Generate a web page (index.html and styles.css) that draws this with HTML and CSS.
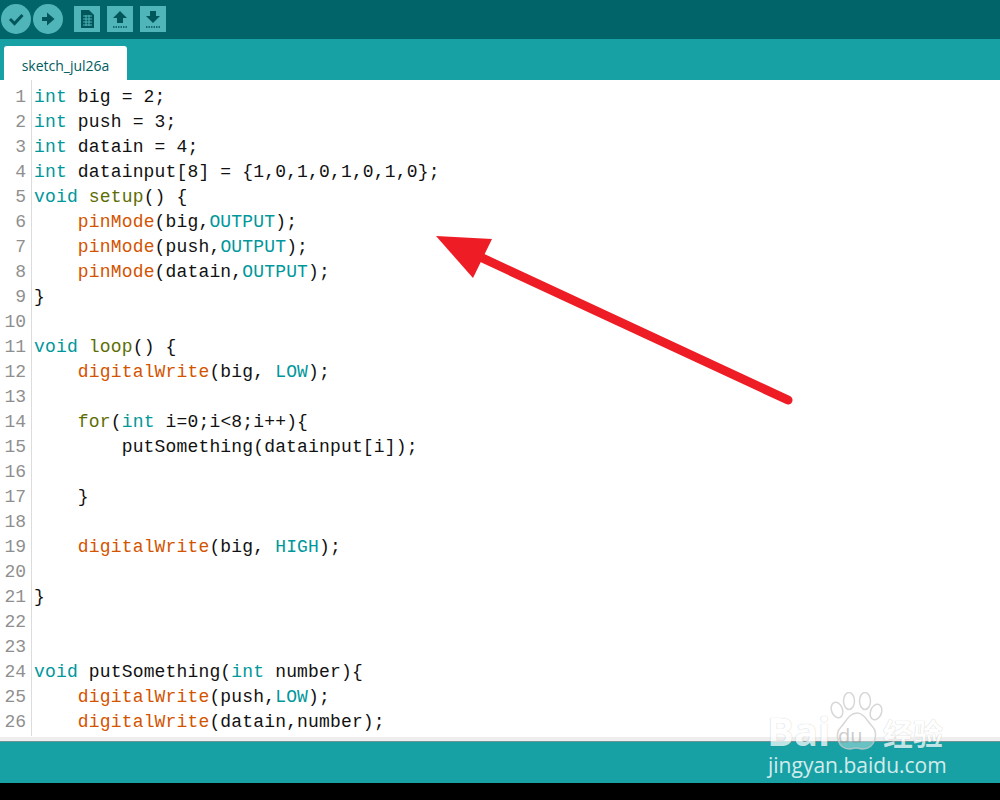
FILE: index.html
```html
<!DOCTYPE html>
<html lang="en">
<head>
<meta charset="utf-8">
<title>sketch_jul26a</title>
<link rel="stylesheet" href="styles.css">
</head>
<body>
<div class="app">
  <header class="toolbar">
    <div class="round-btn"><svg width="30" height="30" viewBox="0 0 30 30"><path d="M9 15l4.500 4.500 8-8.500" fill="none" stroke="#00565a" stroke-width="3"/></svg></div>
    <div class="round-btn"><svg width="30" height="30" viewBox="0 0 30 30"><path d="M9 13h5V8.500l7.500 6.500-7.500 6.500V17H9z" fill="#00565a"/></svg></div>
    <div class="square-btn first"><svg width="26" height="26" viewBox="0 0 26 26"><path d="M7 4h8l5 5v13H7z" fill="#00565a"/><path d="M9 10h9M9 13h9M9 16h9M9 19h9M12 9v11M15 9v11" stroke="#4fb5b8" stroke-width="1" fill="none"/></svg></div>
    <div class="square-btn"><svg width="26" height="26" viewBox="0 0 26 26"><path d="M13 5l7 7h-4v5h-6v-5H6z" fill="#00565a"/><path d="M6 21h14" stroke="#00565a" stroke-width="1.500" stroke-dasharray="1.500 1"/></svg></div>
    <div class="square-btn"><svg width="26" height="26" viewBox="0 0 26 26"><path d="M13 17l7-7h-4V5h-6v5H6z" fill="#00565a"/><path d="M6 21h14" stroke="#00565a" stroke-width="1.500" stroke-dasharray="1.500 1"/></svg></div>
  </header>
  <nav class="tabs"><div class="tab">sketch_jul26a</div></nav>
  <main class="editor">
    <div class="gutter">
      <div>1</div><div>2</div><div>3</div><div>4</div><div>5</div><div>6</div><div>7</div><div>8</div><div>9</div><div>10</div><div>11</div><div>12</div><div>13</div><div>14</div><div>15</div><div>16</div><div>17</div><div>18</div><div>19</div><div>20</div><div>21</div><div>22</div><div>23</div><div>24</div><div>25</div><div>26</div>
    </div>
    <div class="code">
      <div class="line"><span class="k">int</span> big = 2;</div>
      <div class="line"><span class="k">int</span> push = 3;</div>
      <div class="line"><span class="k">int</span> datain = 4;</div>
      <div class="line"><span class="k">int</span> datainput[8] = {1,0,1,0,1,0,1,0};</div>
      <div class="line"><span class="k">void</span> <span class="s">setup</span>() {</div>
      <div class="line">    <span class="f">pinMode</span>(big,<span class="k">OUTPUT</span>);</div>
      <div class="line">    <span class="f">pinMode</span>(push,<span class="k">OUTPUT</span>);</div>
      <div class="line">    <span class="f">pinMode</span>(datain,<span class="k">OUTPUT</span>);</div>
      <div class="line">}</div>
      <div class="line"></div>
      <div class="line"><span class="k">void</span> <span class="s">loop</span>() {</div>
      <div class="line">    <span class="f">digitalWrite</span>(big, <span class="k">LOW</span>);</div>
      <div class="line"></div>
      <div class="line">    <span class="s">for</span>(<span class="k">int</span> i=0;i&lt;8;i++){</div>
      <div class="line">        putSomething(datainput[i]);</div>
      <div class="line"></div>
      <div class="line">    }</div>
      <div class="line"></div>
      <div class="line">    <span class="f">digitalWrite</span>(big, <span class="k">HIGH</span>);</div>
      <div class="line"></div>
      <div class="line">}</div>
      <div class="line"></div>
      <div class="line"></div>
      <div class="line"><span class="k">void</span> putSomething(<span class="k">int</span> number){</div>
      <div class="line">    <span class="f">digitalWrite</span>(push,<span class="k">LOW</span>);</div>
      <div class="line">    <span class="f">digitalWrite</span>(datain,number);</div>
    </div>
  </main>
  <div class="divider"></div>
  <footer class="status"></footer>
  <div class="taskbar"></div>
</div>
<svg class="arrow" width="1000" height="800" viewBox="0 0 1000 800">
  <path d="M788 400L478 256" stroke="#ee1c25" stroke-width="9" stroke-linecap="round" fill="none"/>
  <path d="M436 236L492 239L473 278z" fill="#ee1c25"/>
</svg>
<div class="watermark">
  <svg class="paw" width="60" height="60" viewBox="0 0 60 60">
    <g fill="#fff" fill-opacity=".35" stroke="#c9c9c9" stroke-opacity=".75" stroke-width="1.500">
      <ellipse cx="9" cy="18" rx="5.500" ry="8" transform="rotate(-20 9 18)"/>
      <ellipse cx="21" cy="9" rx="5.500" ry="8.500"/>
      <ellipse cx="37" cy="9" rx="5.500" ry="8.500"/>
      <ellipse cx="48" cy="20" rx="5.500" ry="8" transform="rotate(20 48 20)"/>
      <path d="M29 21c7 0 10 8 15 13 7 7 3 23-9 23-3 0-4-1-7-1s-4 1-7 1c-11 0-15-15-8-22 5-5 8-14 16-14z"/>
    </g>
  </svg>
  <div class="wm-brand">Bai</div>
  <div class="wm-du">du</div>
  <div class="wm-cn">经验</div>
  <div class="wm-url">jingyan.baidu.com</div>
</div>
</body>
</html>
```
FILE: styles.css
```css
html, body { margin: 0; padding: 0; }
body { width: 1000px; height: 800px; overflow: hidden; background: #000; position: relative; }
.app { display: flex; flex-direction: column; height: 800px; }
.toolbar { height: 39px; background: #006468; display: flex; align-items: flex-start; padding: 4px 0 0 1px; gap: 2px; box-sizing: border-box; }
.round-btn { width: 30px; height: 30px; border-radius: 50%; background: #4fb5b8; }
.square-btn { width: 26px; height: 26px; background: #4fb5b8; margin: 2px 0 0 5px; }
.square-btn.first { margin-left: 9px; }
.round-btn svg, .square-btn svg { display: block; }
.tabs { height: 41px; background: #17a1a5; padding: 7px 0 0 4px; box-sizing: border-box; display: flex; }
.tab { width: 123px; height: 34px; background: #fff; border-radius: 3px 3px 0 0; color: #005c5f; font: 14px/40px "Open Sans", sans-serif; text-align: center; }
.editor { height: 657px; background: #fff; display: flex; overflow: hidden; align-items: flex-start; }
.gutter { width: 26px; height: 651px; padding: 5px 5px 0 0; border-right: 1px solid #dcdcdc; color: #8f8f8f; font: 18px/25px "Liberation Mono", monospace; text-align: right; flex: none; }
.code { padding: 5px 0 0 2px; color: #111; font: 18px/25px "Liberation Mono", monospace; letter-spacing: .16px; }
.line { height: 25px; white-space: pre; }
.k { color: #00979c; }
.f { color: #d35400; }
.s { color: #5e6d03; }
.divider { height: 4px; background: #eeeeee; }
.status { height: 42px; background: #17a1a5; border-top: 1px solid #6f9294; box-sizing: border-box; }
.taskbar { height: 17px; background: #000; }
.arrow { position: absolute; left: 0; top: 0; }
.watermark { position: absolute; left: 768px; top: 692px; width: 180px; height: 88px; color: #fff; }
.paw { position: absolute; left: 60px; top: 0; }
.wm-brand { position: absolute; left: -1px; top: 21px; font: bold 40px/36px "Open Sans", sans-serif; opacity: .72; text-shadow: 0 0 1px rgba(0,0,0,.35); }
.wm-du { position: absolute; left: 70px; top: 32px; font: 20px/24px "Open Sans", sans-serif; color: #8d8d8d; opacity: .45; }
.wm-cn { position: absolute; left: 115px; top: 24px; font: bold 30px/32px "Noto Sans CJK SC", sans-serif; opacity: .72; text-shadow: 0 0 1px rgba(0,0,0,.35); white-space: nowrap; }
.wm-url { position: absolute; left: 0; top: 61px; font: 21px/24px "Open Sans", sans-serif; opacity: .8; white-space: nowrap; }
```
